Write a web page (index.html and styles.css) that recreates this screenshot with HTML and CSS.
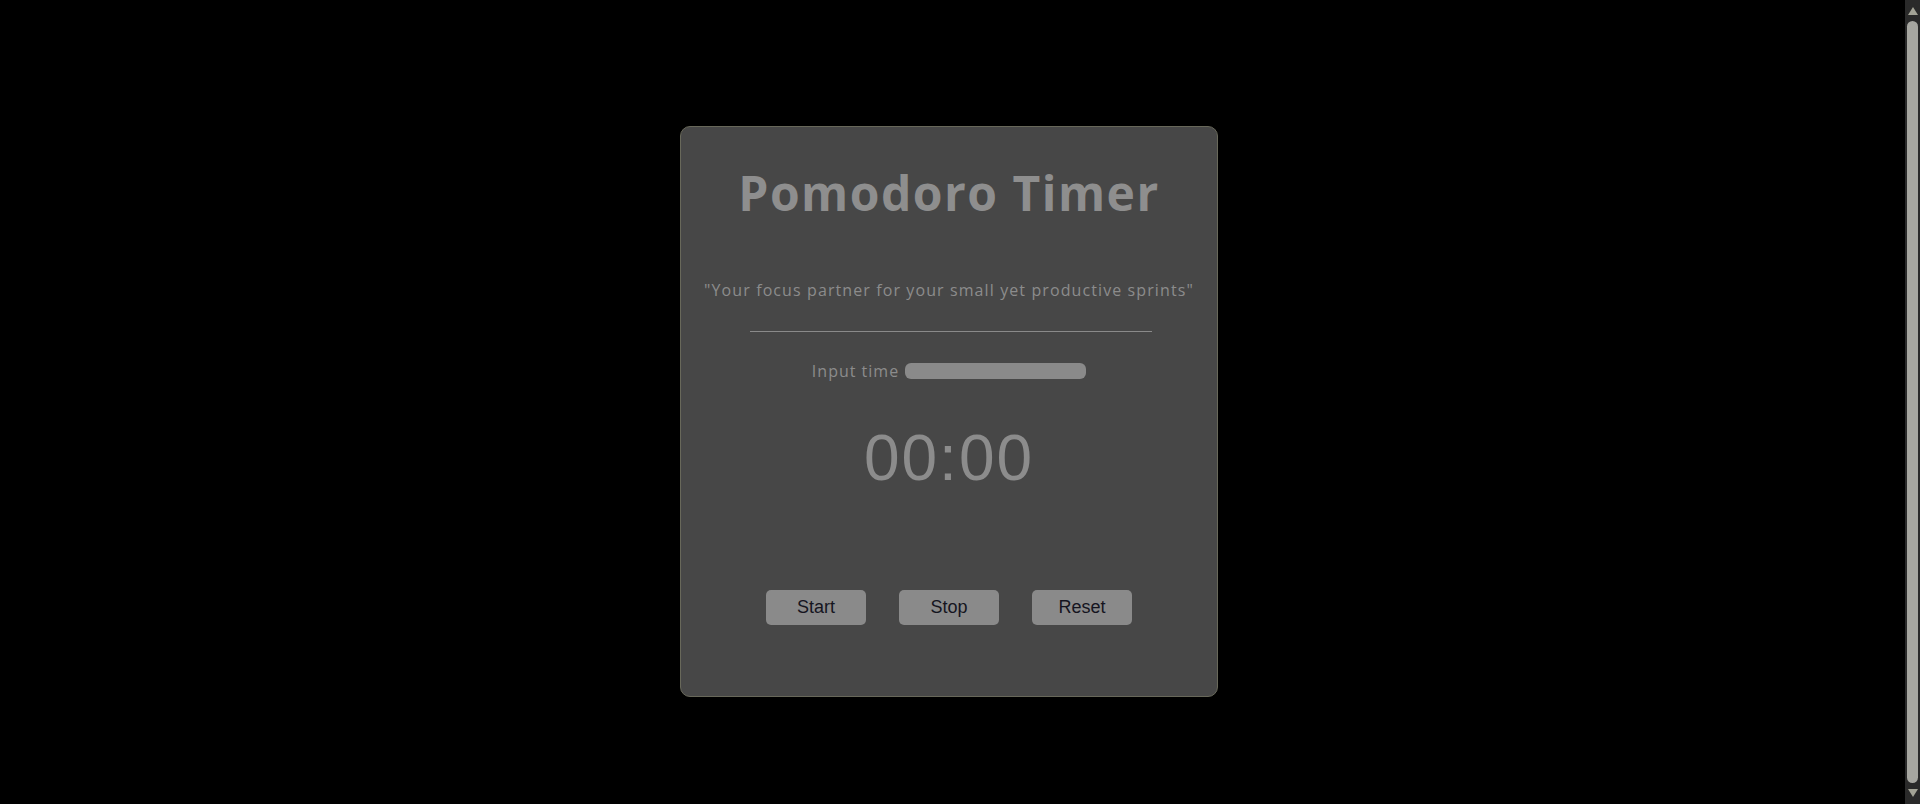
FILE: index.html
```html
<!DOCTYPE html>
<html lang="en">
<head>
<meta charset="utf-8">
<title>Pomodoro Timer</title>
<link rel="stylesheet" href="styles.css">
</head>
<body>
<main class="page">
  <section class="card">
    <h1 class="title">Pomodoro Timer</h1>
    <p class="tagline">"Your focus partner for your small yet productive sprints"</p>
    <hr class="divider">
    <div class="input-row">
      <label class="input-label" for="time">Input time</label>
      <input class="time-input" id="time" type="text">
    </div>
    <div class="clock">00:00</div>
    <div class="controls">
      <button class="btn" type="button">Start</button>
      <button class="btn" type="button">Stop</button>
      <button class="btn" type="button">Reset</button>
    </div>
  </section>
</main>
<div class="scrollbar" aria-hidden="true">
  <span class="arrow arrow-up"></span>
  <span class="thumb"></span>
  <span class="arrow arrow-down"></span>
</div>
</body>
</html>
```

FILE: styles.css
```css
html {
  background: #000;
  overflow: hidden;
}

body {
  margin: 0;
  height: 804px;
  background: #000;
  display: flex;
  font-family: "Open Sans", "Noto Sans", sans-serif;
}

.page {
  flex: 1;
  padding: 126px 7px 0 0;
  display: flex;
  justify-content: center;
  align-items: flex-start;
}

.card {
  box-sizing: border-box;
  width: 538px;
  height: 571px;
  background: #474747;
  border: 1px solid #68685a;
  border-radius: 10px;
  display: flex;
  flex-direction: column;
  align-items: center;
  padding-top: 30px;
  color: #8c8c8c;
}

.title {
  margin: 0;
  font-size: 48px;
  line-height: 72px;
  font-weight: 700;
  letter-spacing: 1.5px;
  color: #8e8e8e;
}

.tagline {
  margin: 49px 0 0;
  font-size: 16px;
  line-height: 24px;
  letter-spacing: 1.1px;
  color: #8c8c8c;
}

.divider {
  width: 402px;
  margin: 29px 0 0 3px;
  border: 0;
  height: 1px;
  background: #8a8a8a;
}

.input-row {
  margin-top: 27px;
  display: flex;
  align-items: center;
  gap: 6px;
  height: 24px;
}

.input-label {
  font-size: 16px;
  letter-spacing: 1px;
  color: #8c8c8c;
}

.time-input {
  box-sizing: border-box;
  width: 181px;
  height: 16px;
  border: 0;
  border-radius: 6px;
  background: #8a8a8a;
  padding: 0;
}

.clock {
  margin-top: 38px;
  font-family: "Liberation Sans", Arial, sans-serif;
  font-size: 64px;
  line-height: 74px;
  letter-spacing: 2px;
  color: #8c8c8c;
}

.controls {
  margin-top: 95px;
  display: flex;
  gap: 33px;
}

.btn {
  width: 100px;
  height: 35px;
  border: 0;
  border-radius: 5px;
  background: #8a8a8a;
  color: #15151f;
  font-family: "Liberation Sans", Arial, sans-serif;
  font-size: 18px;
  padding: 0;
}

.scrollbar {
  width: 15px;
  height: 804px;
  background: #2a2a2a;
  display: flex;
  flex-direction: column;
  align-items: center;
  padding: 7px 0;
  box-sizing: border-box;
  gap: 6px;
}

.arrow {
  width: 0;
  height: 0;
  border-left: 5px solid transparent;
  border-right: 5px solid transparent;
}

.arrow-up {
  border-bottom: 8px solid #a3a396;
}

.arrow-down {
  border-top: 8px solid #a3a396;
}

.thumb {
  flex: 1;
  width: 11px;
  border-radius: 6px;
  background: #a6a6a0;
}
```
